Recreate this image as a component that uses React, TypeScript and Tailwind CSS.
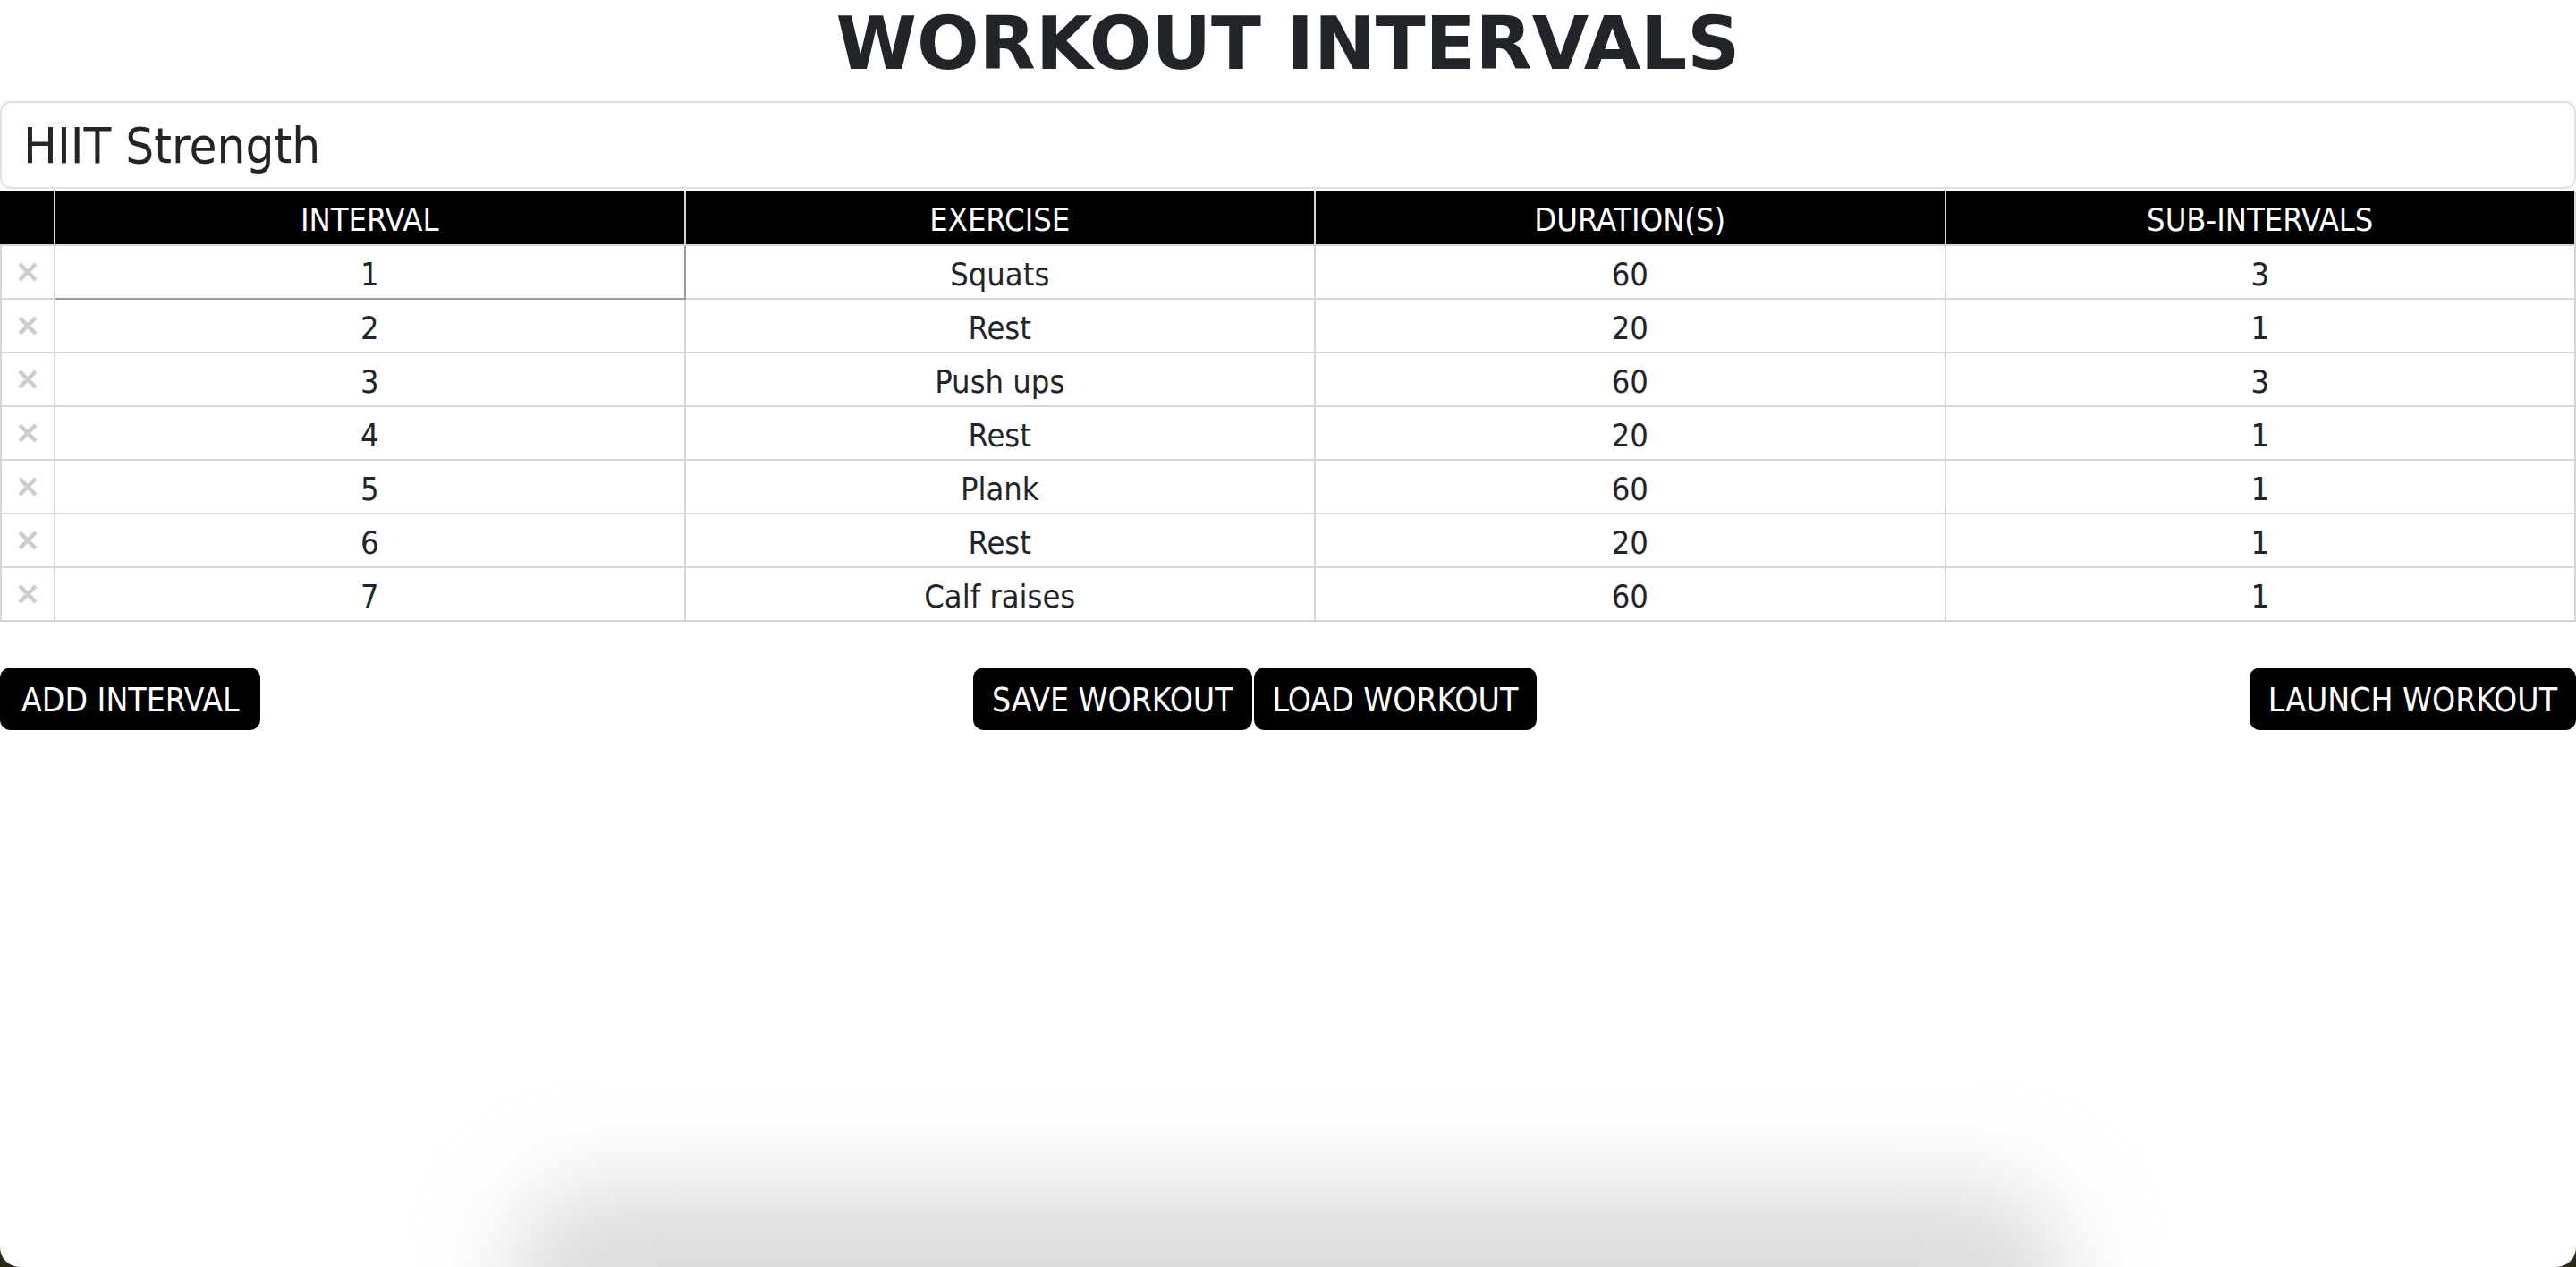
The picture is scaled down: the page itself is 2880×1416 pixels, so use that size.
import React from "react";

const rows = [
  { n: 1, ex: "Squats", d: 60, s: 3 },
  { n: 2, ex: "Rest", d: 20, s: 1 },
  { n: 3, ex: "Push ups", d: 60, s: 3 },
  { n: 4, ex: "Rest", d: 20, s: 1 },
  { n: 5, ex: "Plank", d: 60, s: 1 },
  { n: 6, ex: "Rest", d: 20, s: 1 },
  { n: 7, ex: "Calf raises", d: 60, s: 1 },
];

function XIcon() {
  return (
    <svg width="22" height="20" viewBox="0 0 22 20" className="block mx-auto">
      <path d="M2 1 L20 19 M20 1 L2 19" stroke="#cccccc" strokeWidth="4.5" strokeLinecap="butt" />
    </svg>
  );
}

const cell = "border-2 border-[#d6d6d6] text-center align-middle pt-[6px] leading-[42px]";
const btnBase = "h-[70px] bg-black text-white rounded-[12px] text-[37px] leading-none pt-[2px]";

export default function App() {
  return (
    <div className="w-[2880px] h-[1416px] bg-[#2a281c] overflow-hidden">
      <div className="relative w-full h-full bg-white rounded-b-[22px] overflow-hidden font-['DejaVu_Sans_Condensed','DejaVu_Sans',sans-serif] [font-stretch:condensed] text-[#212529]">
        <h1 className="h-[113px] pt-0 text-center font-['DejaVu_Sans','Verdana',sans-serif] [font-stretch:normal] font-bold text-[82px] leading-[98px] text-[#212529]">
          WORKOUT INTERVALS
        </h1>
        <div className="h-[98px] border-2 border-[#dee2e6] rounded-[12px] flex items-center pl-[24px] pt-[2px] text-[56px] leading-none">
          HIIT Strength
        </div>
        <table className="w-full border-collapse table-fixed mt-[2px] text-[36px]">
          <colgroup>
            <col className="w-[60px]" />
            <col />
            <col />
            <col />
            <col />
          </colgroup>
          <thead>
            <tr className="h-[60px] bg-black text-white">
              <th className="border-2 border-[#d6d6d6] border-t-black border-l-black font-normal"></th>
              <th className="border-2 border-[#d6d6d6] border-t-black font-normal pt-[3px] leading-[42px]">INTERVAL</th>
              <th className="border-2 border-[#d6d6d6] border-t-black font-normal pt-[3px] leading-[42px]">EXERCISE</th>
              <th className="border-2 border-[#d6d6d6] border-t-black font-normal pt-[3px] leading-[42px]">DURATION(S)</th>
              <th className="border-2 border-[#d6d6d6] border-t-black font-normal pt-[3px] leading-[42px]">SUB-INTERVALS</th>
            </tr>
          </thead>
          <tbody>
            {rows.map((r) => (
              <tr key={r.n} className="h-[60px]">
                <td className="border-2 border-[#d6d6d6] p-0 align-middle">
                  <XIcon />
                </td>
                <td
                  className={
                    r.n === 1
                      ? "border-2 border-[#9a9a9a] text-center align-middle pt-[6px] leading-[42px]"
                      : cell
                  }
                >
                  {r.n}
                </td>
                <td className={cell}>{r.ex}</td>
                <td className={cell}>{r.d}</td>
                <td className={cell}>{r.s}</td>
              </tr>
            ))}
          </tbody>
        </table>
        <div className="flex justify-between items-center mt-[51px]">
          <button className={btnBase + " px-[24px]"}>ADD INTERVAL</button>
          <div className="flex gap-[2px]">
            <button className={btnBase + " px-[21px]"}>SAVE WORKOUT</button>
            <button className={btnBase + " px-[21px]"}>LOAD WORKOUT</button>
          </div>
          <button className={btnBase + " px-[21px]"}>LAUNCH WORKOUT</button>
        </div>
        <div className="absolute left-[570px] right-[570px] bottom-[-150px] h-[240px] bg-[#dcdcdc] rounded-[100px] blur-[50px]"></div>
      </div>
    </div>
  );
}
